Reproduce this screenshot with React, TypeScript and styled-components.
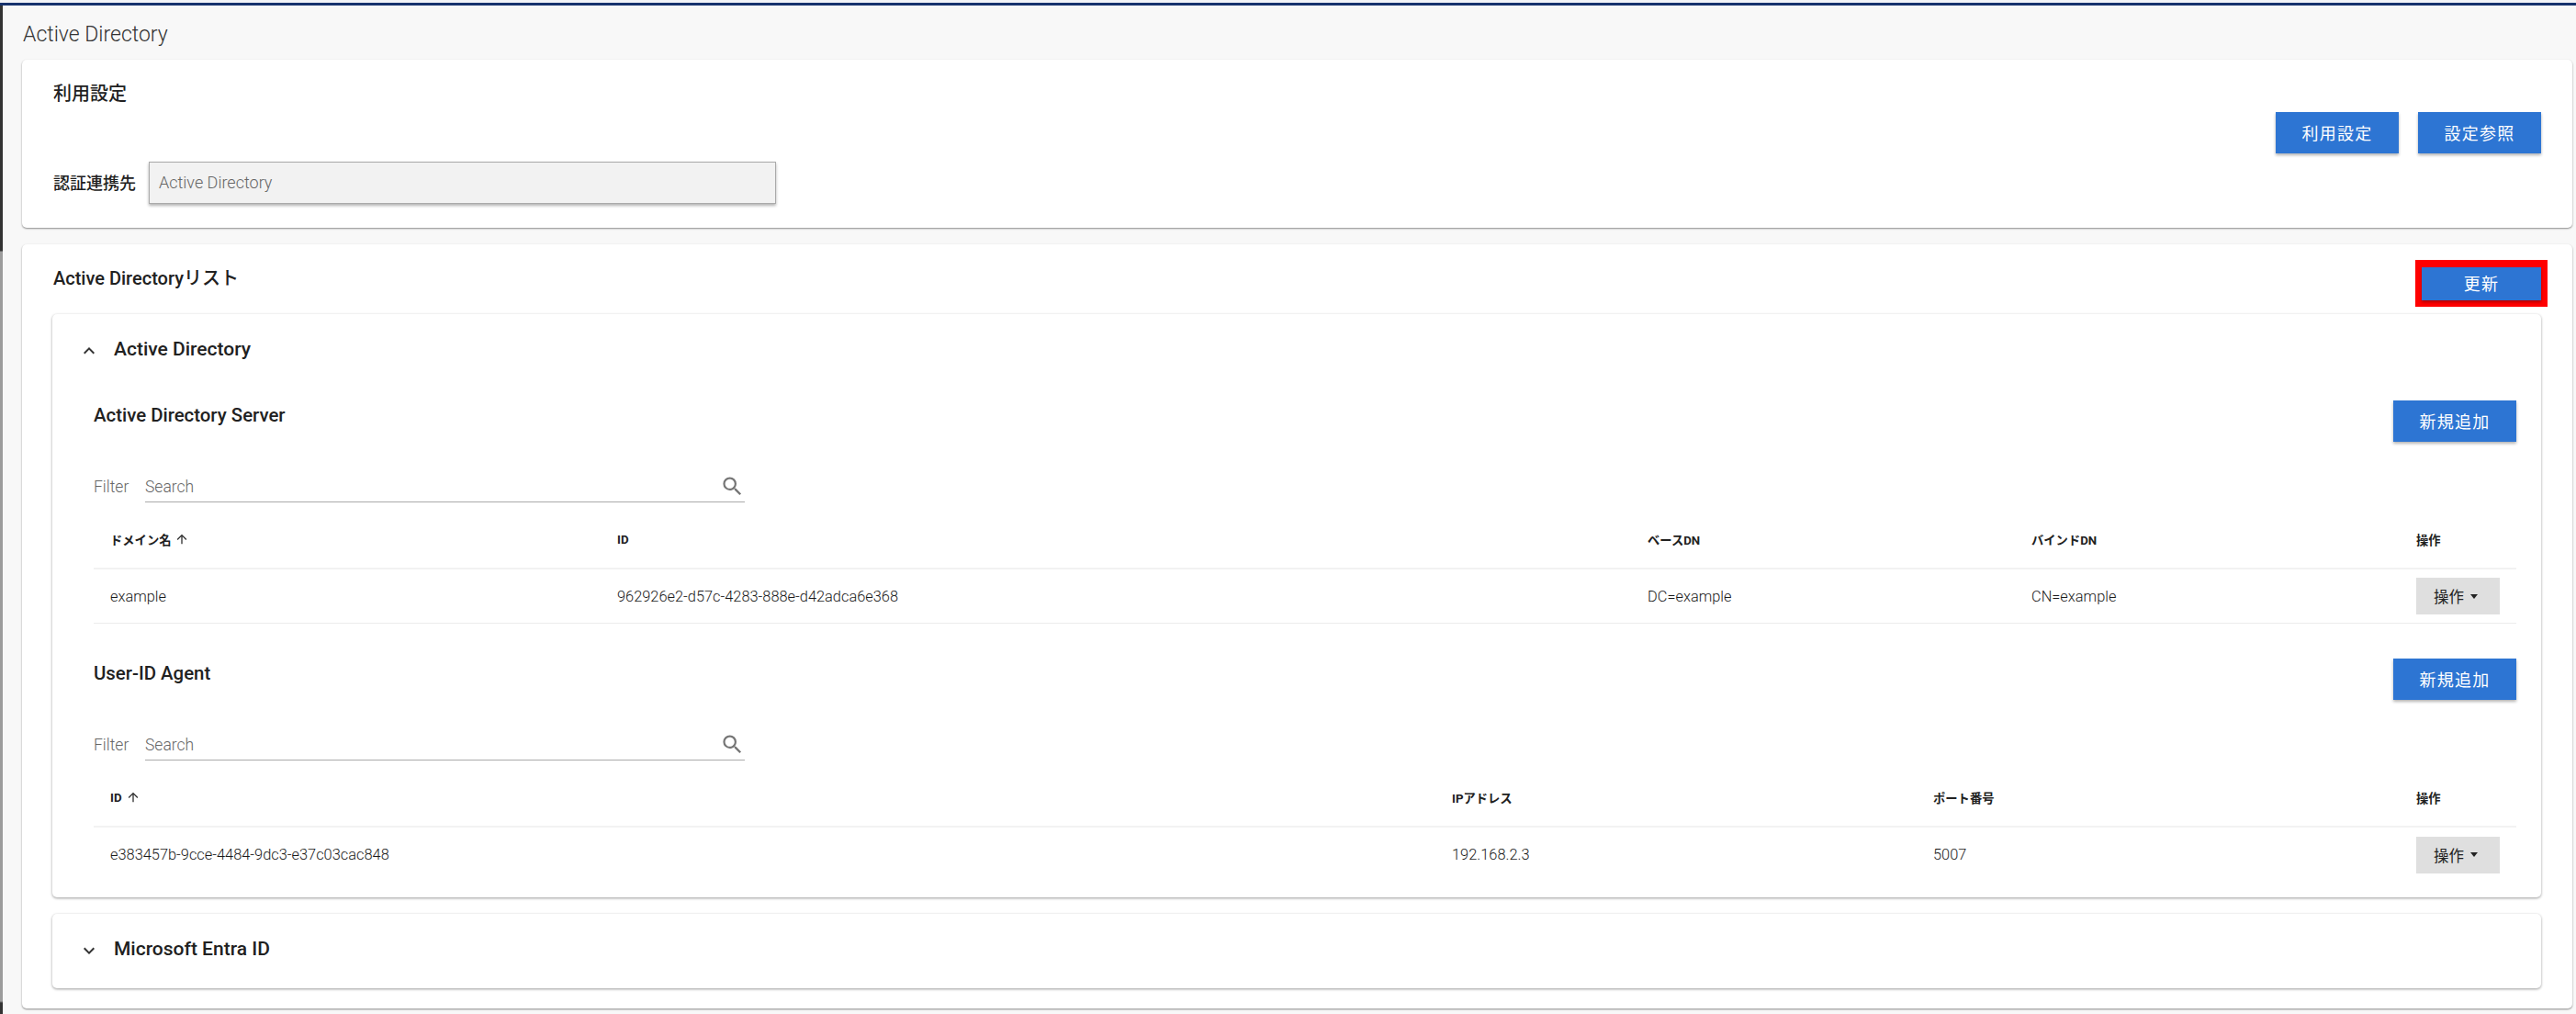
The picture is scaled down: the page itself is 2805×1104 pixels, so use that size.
import React from "react";
import styled, { createGlobalStyle } from "styled-components";

const Global = createGlobalStyle`
  html, body { margin: 0; padding: 0; background: #f8f8f8; }
  body { font-family: Roboto, "Noto Sans CJK JP", sans-serif; color: #212121; }
  * { box-sizing: border-box; }
`;

const Frame = styled.div`
  width: 2805px; height: 1104px; overflow: hidden; background: #f8f8f8;
  display: flex; flex-direction: column;
  border-top: 3px solid #f2f4f8;
`;
const TopLine = styled.div`height: 3px; background: #16326e; flex: none;`;
const Body = styled.div`display: flex; flex: 1; min-height: 0;`;
const LeftEdge = styled.div`
  width: 3px; flex: none;
  background: linear-gradient(180deg, #333 0, #333 267px, #9c9c9c 268px, #9c9c9c 1084px, #333 1086px, #333 100%);
`;
const Content = styled.div`flex: 1; min-width: 0; padding: 0 4px 0 21px;`;
const PageTitle = styled.h1`
  margin: 0; height: 59px; display: flex; align-items: center; padding: 4px 0 0 1px;
  font-size: 23px; font-weight: 300; color: #333;
`;
const Card = styled.section<{ $h: number }>`
  height: ${p => p.$h}px; background: #fff; border-radius: 5px;
  box-shadow: 0 1px 2px rgba(0,0,0,.45);
`;
const SettingCard = styled(Card)`
  display: flex; justify-content: space-between; padding: 27px 34px 0 34px; margin-bottom: 18px;
`;
const SettingMain = styled.div`display: flex; flex-direction: column;`;
const CardTitle = styled.h2`
  margin: 0; font-size: 20px; font-weight: 500; line-height: 20px; color: #212121;
`;
const FieldRow = styled.div`display: flex; align-items: center; gap: 14px; margin-top: 64px;`;
const FieldLabel = styled.label`font-size: 18px; font-weight: 500; position: relative; top: -1px;`;
const ReadonlyInput = styled.div`
  width: 683px; height: 46px; padding: 0 0 2px 10px; display: flex; align-items: center;
  background: #f2f2f2; border: 1px solid #aaa; box-shadow: 0 2px 3px rgba(0,0,0,.3);
  font-size: 18px; font-weight: 300; color: #666;
`;
const BtnGroup = styled.div`display: flex; gap: 21px; margin-top: 30px; align-self: flex-start;`;
const Btn = styled.button<{ $w: number; $h?: number }>`
  width: ${p => p.$w}px; height: ${p => p.$h ?? 45}px; border: 0; background: #2d75d3; color: #fff;
  font-family: inherit; font-size: 18px; font-weight: 400; letter-spacing: 1.2px; padding: 0 0 2px;
  box-shadow: 0 2px 3px rgba(0,0,0,.3);
`;
const ListHead = styled.div`
  display: flex; justify-content: space-between; align-items: flex-start;
  padding: 17px 27px 0 34px; height: 76px;
`;
const ListTitle = styled(CardTitle)`margin-top: 10px;`;
const Highlight = styled.div`border: 7px solid #f00; border-top-width: 8px;`;
const Accordion = styled.div<{ $h: number }>`
  height: ${p => p.$h}px; margin: 0 34px 18px 33px; background: #fff; border-radius: 5px;
  box-shadow: 0 1px 3px rgba(0,0,0,.4);
`;
const AccHead = styled.div`display: flex; align-items: center; padding: 0 0 0 28px; height: 76px;`;
const AccTitle = styled.h3`margin: 0 0 0 15px; font-size: 21px; font-weight: 500; color: #212121;`;
const AccBody = styled.div`padding: 0 27px 0 45px;`;
const SectionHead = styled.div<{ $mt: number }>`
  display: flex; justify-content: space-between; align-items: flex-start; margin-top: ${p => p.$mt}px; height: 45px;
`;
const SectionTitle = styled.h4`margin: 6px 0 0; font-size: 20.4px; font-weight: 500; line-height: 20px;`;
const FilterRow = styled.div`display: flex; margin-top: 21px; height: 45px; font-size: 17.5px; font-weight: 300; color: #666;`;
const FilterLabel = styled.span`width: 56px; line-height: 56px;`;
const SearchBox = styled.div`
  width: 653px; height: 45px; border-bottom: 1px solid #aaa; padding-top: 11px;
  display: flex; align-items: center; justify-content: space-between;
`;
const TableWrap = styled.div`display: flex; flex-direction: column;`;
const HeadRow = styled.div<{ $cols: string }>`
  display: grid; grid-template-columns: ${p => p.$cols}; align-items: center; height: 73px; padding: 9px 0 0 18px;
  border-bottom: 2px solid #f2f2f2; font-size: 13.3px; font-weight: 700; color: #212121;
`;
const BodyRow = styled.div<{ $cols: string; $border: boolean }>`
  display: grid; grid-template-columns: ${p => p.$cols}; align-items: center; height: 59px; padding-left: 18px;
  border-bottom: ${p => (p.$border ? "1px solid #ececec" : "0")}; font-size: 16.4px; font-weight: 300; color: #1a1a1a;
`;
const SortCell = styled.span`display: inline-flex; align-items: center; gap: 4px;`;
const ActionCell = styled.span`display: flex;`;
const ActionBtn = styled.button`
  width: 91px; height: 40px; border: 0; background: #dfdfdf; color: #222; padding: 0 0 0 19px;
  font-family: inherit; font-size: 16.5px; font-weight: 400;
  display: inline-flex; align-items: center; justify-content: flex-start; gap: 7px;
`;
const Caret = styled.span`
  width: 0; height: 0; border-left: 4px solid transparent; border-right: 4px solid transparent; border-top: 5px solid #222;
`;
const ChevronIcon = styled.svg<{ $open: boolean }>`
  flex: none; margin-top: 4px; transform: ${p => (p.$open ? "none" : "rotate(180deg)")};
`;

const Up = () => (
  <svg width="16" height="16" viewBox="0 0 24 24" fill="#333"><path d="M4 12l1.41 1.41L11 7.83V20h2V7.83l5.58 5.59L20 12l-8-8-8 8z" /></svg>
);
const Search = () => (
  <svg width="27" height="27" viewBox="0 0 24 24" fill="#757575"><path d="M15.5 14h-.79l-.28-.27A6.47 6.47 0 0 0 16 9.5 6.5 6.5 0 1 0 9.5 16c1.61 0 3.09-.59 4.23-1.57l.27.28v.79l5 4.99L20.49 19l-4.99-5zm-6 0C7.01 14 5 11.99 5 9.5S7.01 5 9.5 5 14 7.01 14 9.5 11.99 14 9.5 14z" /></svg>
);
const Chevron = ({ open }: { open: boolean }) => (
  <ChevronIcon $open={open} width="24" height="24" viewBox="0 0 24 24" fill="#333"><path d="M12 8l-6 6 1.41 1.41L12 10.83l4.59 4.58L18 14z" /></ChevronIcon>
);

const cols1 = "552px 1122px 418px 419px 1fr";
const cols2 = "1461px 524px 526px 1fr";

const Filter = () => (
  <FilterRow>
    <FilterLabel>Filter</FilterLabel>
    <SearchBox>Search<Search /></SearchBox>
  </FilterRow>
);

export default function App() {
  return (
    <Frame>
      <Global />
      <TopLine />
      <Body>
        <LeftEdge />
        <Content>
          <PageTitle>Active Directory</PageTitle>
          <SettingCard $h={183}>
            <SettingMain>
              <CardTitle>利用設定</CardTitle>
              <FieldRow>
                <FieldLabel>認証連携先</FieldLabel>
                <ReadonlyInput>Active Directory</ReadonlyInput>
              </FieldRow>
            </SettingMain>
            <BtnGroup>
              <Btn $w={134}>利用設定</Btn>
              <Btn $w={134}>設定参照</Btn>
            </BtnGroup>
          </SettingCard>
          <Card $h={832}>
            <ListHead>
              <ListTitle>Active Directoryリスト</ListTitle>
              <Highlight><Btn $w={130} $h={36}>更新</Btn></Highlight>
            </ListHead>
            <Accordion $h={635}>
              <AccHead><Chevron open /><AccTitle>Active Directory</AccTitle></AccHead>
              <AccBody>
                <SectionHead $mt={18}>
                  <SectionTitle>Active Directory Server</SectionTitle>
                  <Btn $w={134}>新規追加</Btn>
                </SectionHead>
                <Filter />
                <TableWrap>
                  <HeadRow $cols={cols1}>
                    <SortCell>ドメイン名<Up /></SortCell><span>ID</span><span>ベースDN</span><span>バインドDN</span><span>操作</span>
                  </HeadRow>
                  <BodyRow $cols={cols1} $border>
                    <span>example</span><span>962926e2-d57c-4283-888e-d42adca6e368</span><span>DC=example</span><span>CN=example</span>
                    <ActionCell><ActionBtn>操作<Caret /></ActionBtn></ActionCell>
                  </BodyRow>
                </TableWrap>
                <SectionHead $mt={38}>
                  <SectionTitle>User-ID Agent</SectionTitle>
                  <Btn $w={134}>新規追加</Btn>
                </SectionHead>
                <Filter />
                <TableWrap>
                  <HeadRow $cols={cols2}>
                    <SortCell>ID<Up /></SortCell><span>IPアドレス</span><span>ポート番号</span><span>操作</span>
                  </HeadRow>
                  <BodyRow $cols={cols2} $border={false}>
                    <span>e383457b-9cce-4484-9dc3-e37c03cac848</span><span>192.168.2.3</span><span>5007</span>
                    <ActionCell><ActionBtn>操作<Caret /></ActionBtn></ActionCell>
                  </BodyRow>
                </TableWrap>
              </AccBody>
            </Accordion>
            <Accordion $h={81}>
              <AccHead><Chevron open={false} /><AccTitle>Microsoft Entra ID</AccTitle></AccHead>
            </Accordion>
          </Card>
        </Content>
      </Body>
    </Frame>
  );
}
